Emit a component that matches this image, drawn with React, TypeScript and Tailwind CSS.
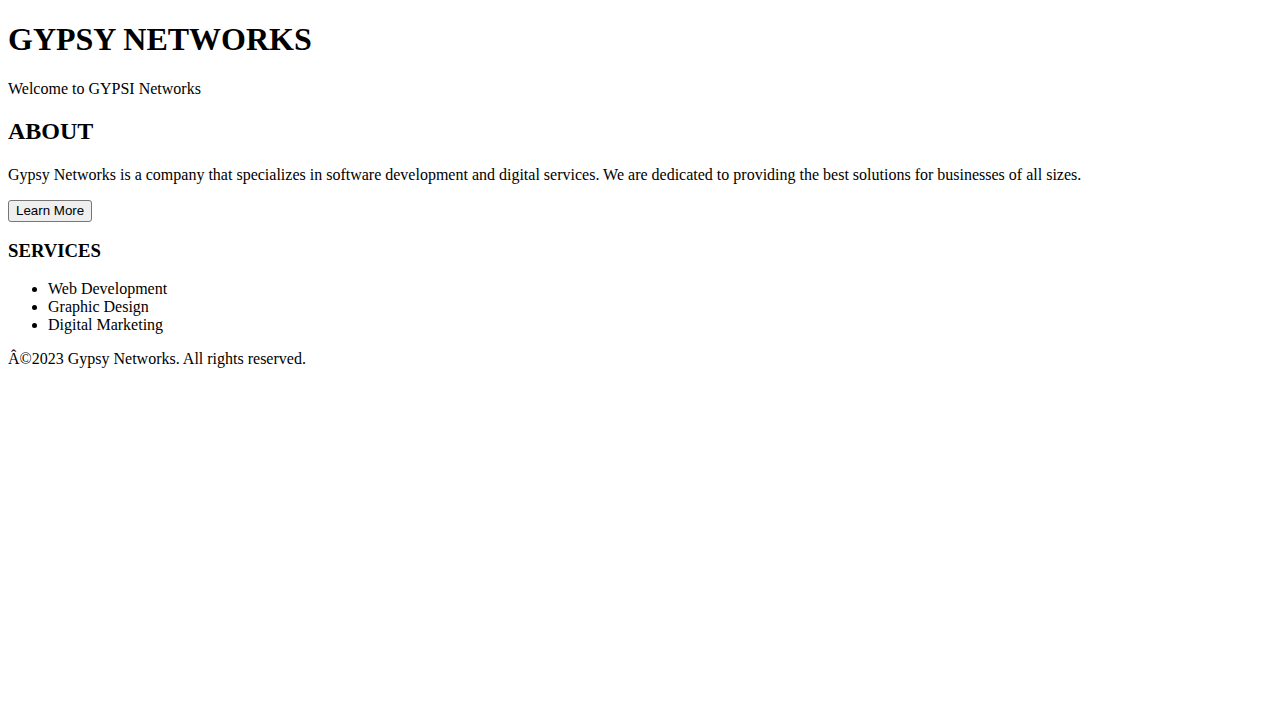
export default function App() {
    const services = ["Web Development", "Graphic Design", "Digital Marketing"];

    return (
        <div className="px-2 font-['Liberation_Serif',serif] text-black text-base leading-[normal] bg-white min-h-[720px]">
            <header>
                <h1 className="text-[32px] font-bold my-[21.44px]">GYPSY NETWORKS</h1>
                <p className="my-4">Welcome to GYPSI Networks</p>
            </header>
            <section>
                <h2 className="text-[24px] font-bold mt-[19.92px] mb-[21px]">ABOUT</h2>
                <p className="mt-[21px] mb-[16.4px]">
                    Gypsy Networks is a company that specializes in software development and digital services. We are dedicated to providing the best solutions for businesses of all sizes.
                </p>
                <button className="font-['Liberation_Sans',Arial,sans-serif] text-[13.333px] leading-[normal] px-[7px] pt-[2px] pb-[3px] bg-[#efefef] border border-[#767676] rounded-[3px] text-black">
                    Learn More
                </button>
            </section>
            <section>
                <h3 className="text-[18.72px] font-bold mt-[17.8px] mb-[17.7px]">SERVICES</h3>
                <ul className="list-disc pl-10 mt-[17.7px] mb-4">
                    {services.map((s) => (
                        <li key={s}>{s}</li>
                    ))}
                </ul>
            </section>
            <footer>
                <p className="my-4">Â©2023 Gypsy Networks. All rights reserved.</p>
            </footer>
        </div>
    );
}
